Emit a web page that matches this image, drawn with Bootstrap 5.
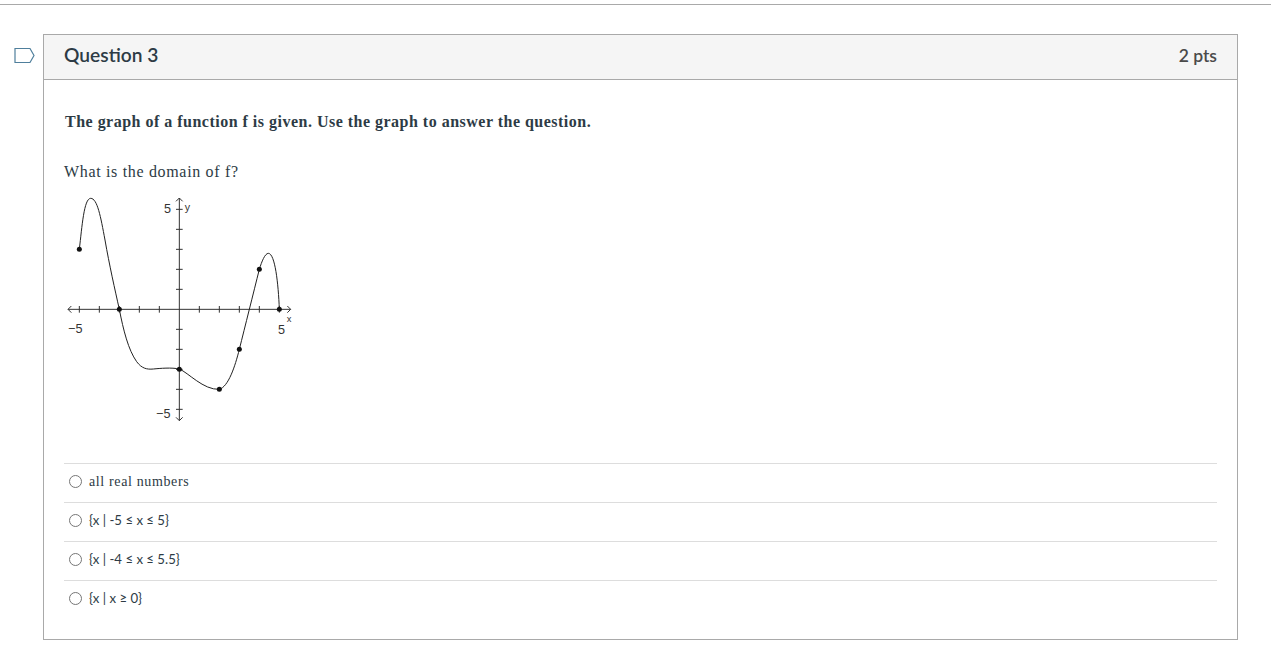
<!DOCTYPE html>
<html lang="en">
<head>
<meta charset="utf-8">
<title>Question 3</title>
<link href="https://cdn.jsdelivr.net/npm/bootstrap@5.3.0/dist/css/bootstrap.min.css" rel="stylesheet">
<style>
html, body { background: #fff; }
body { padding-top: 4px; color: #2d3b45; font-family: "Lato", sans-serif; overflow: hidden; }
.top-rule { height: 1px; background: #a9a9a9; margin-bottom: 29px; }
.quiz-wrap { padding-right: 33px; }
.flag-col { width: 43px; flex: none; padding: 13px 0 0 14px; }
.flag-col svg { display: block; }
.q-card { flex: 1; border: 1px solid #a9a9a9; border-radius: 0; height: 606px; --bs-card-bg: #fff; }
.q-head { height: 45px; padding: 0 20px 2px; background: #f5f5f5; border-bottom: 1px solid #a9a9a9; border-radius: 0 !important; }
.q-title { font-size: 19.2px; font-weight: 600; color: #2d3b45; margin: 0 0 3px; line-height: 1; }
.q-pts { font-size: 17.5px; font-weight: 600; color: #4a4a4a; }
.q-body { padding: 0 20px; }
.q-lead { font-family: "Liberation Serif", serif; font-weight: 700; font-size: 16px; letter-spacing: .49px; line-height: 20px; margin: 32px 0 0 1px; color: #2d3b45; }
.q-ask { font-family: "Liberation Serif", serif; font-size: 16px; letter-spacing: .67px; line-height: 20px; margin: 30px 0 0; color: #2d3b45; }
.graph-svg { display: block; margin-top: 8px; margin-bottom: 33px; }
.graph-svg text { font-family: "Liberation Sans", sans-serif; fill: #333; }
.opt-row { height: 39px; border-top: 1px solid #ddd; gap: 7px; padding: 0 0 2px 5px; }
.opt-row .form-check-input { width: 13px; height: 13px; margin: 0 0 2px; border: 1px solid #767676; flex: none; }
.opt-label { margin: 0; color: #2d3b45; font-size: 14px; line-height: 1; }
.opt-serif { font-family: "Liberation Serif", serif; letter-spacing: .63px; }
.opt-math { font-family: "Lato", sans-serif; font-size: 13.2px; font-weight: 400; }
</style>
</head>
<body>
<div class="top-rule"></div>
<div class="d-flex quiz-wrap">
  <div class="flag-col">
    <svg width="21" height="17" viewBox="0 0 21 17" aria-hidden="true"><path d="M1 1.5H16L20 8.5L16 15.5H1Z" fill="none" stroke="#4f7f9c" stroke-width="1.2"/></svg>
  </div>
  <div class="card q-card">
    <div class="card-header d-flex justify-content-between align-items-center q-head">
      <h2 class="q-title">Question 3</h2>
      <span class="q-pts">2 pts</span>
    </div>
    <div class="q-body">
      <p class="q-lead">The graph of a function f is given. Use the graph to answer the question.</p>
      <p class="q-ask">What is the domain of f?</p>
      <svg class="graph-svg" width="240" height="240" viewBox="12 0 720 720" role="img" aria-label="Graph of f">
        <g fill="none" stroke="#333" stroke-width="3">
          <path d="M24 358H692M358 24V692"/>
          <path d="M34 348L24 358L34 368M682 348L692 358L682 368M348 34L358 24L368 34M348 682L358 692L368 682"/>
          <path d="M58 348V368M118 348V368M178 348V368M238 348V368M298 348V368M418 348V368M478 348V368M538 348V368M598 348V368M658 348V368"/>
          <path d="M348 58H368M348 118H368M348 178H368M348 238H368M348 298H368M348 418H368M348 478H368M348 538H368M348 598H368M348 658H368"/>
          <path stroke="#222" d="M58 178C66 110 72 25 92 25C112 25 122 80 135 150C148 225 165 300 178 358C190 420 205 480 230 515C245 535 260 539 280 537C300 535 335 532 358 537C385 548 430 600 478 598C505 590 525 530 538 478C555 410 580 310 598 238C605 215 615 190 625 190C645 190 655 280 658 358"/>
        </g>
        <g fill="#111">
          <circle cx="58" cy="178" r="7.5"/><circle cx="178" cy="358" r="7.5"/><circle cx="358" cy="538" r="7.5"/><circle cx="478" cy="598" r="7.5"/><circle cx="538" cy="478" r="7.5"/><circle cx="598" cy="238" r="7.5"/><circle cx="658" cy="358" r="7.5"/>
        </g>
        <text x="312" y="70" font-size="38">5</text>
        <text x="374" y="64" font-size="32">y</text>
        <text x="24" y="430" font-size="38">−5</text>
        <text x="654" y="432" font-size="38">5</text>
        <text x="680" y="396" font-size="28">x</text>
        <text x="288" y="684" font-size="38">−5</text>
      </svg>
      <div class="d-flex align-items-center opt-row"><input class="form-check-input" type="radio" name="q3" id="o1"><label class="opt-label opt-serif" for="o1">all real numbers</label></div>
      <div class="d-flex align-items-center opt-row"><input class="form-check-input" type="radio" name="q3" id="o2"><label class="opt-label opt-math" for="o2">{x | -5 ≤ x ≤ 5}</label></div>
      <div class="d-flex align-items-center opt-row"><input class="form-check-input" type="radio" name="q3" id="o3"><label class="opt-label opt-math" for="o3">{x | -4 ≤ x ≤ 5.5}</label></div>
      <div class="d-flex align-items-center opt-row"><input class="form-check-input" type="radio" name="q3" id="o4"><label class="opt-label opt-math" for="o4">{x | x ≥ 0}</label></div>
    </div>
  </div>
</div>
<script src="https://cdn.jsdelivr.net/npm/bootstrap@5.3.0/dist/js/bootstrap.bundle.min.js"></script>
</body>
</html>
